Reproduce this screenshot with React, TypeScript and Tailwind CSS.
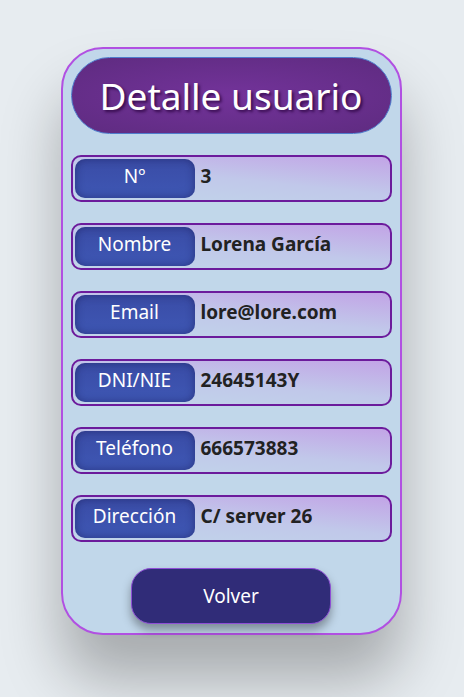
const rows = [
  { label: "Nº", value: "3" },
  { label: "Nombre", value: "Lorena García" },
  { label: "Email", value: "lore@lore.com" },
  { label: "DNI/NIE", value: "24645143Y" },
  { label: "Teléfono", value: "666573883" },
  { label: "Dirección", value: "C/ server 26" },
]

export default function App() {
  return (
    <div className="flex min-h-[697px] justify-center bg-[#e7ecf0] pt-[47px] pr-[2px] font-['Noto_Sans','Open_Sans',sans-serif]">
      <div className="flex h-[588px] w-[341px] flex-col items-center rounded-[42px] border-2 border-[#b150e2] bg-[#c1d7ea] px-[8px] pt-[8px] shadow-[0_45px_60px_rgba(0,0,0,0.28)]">
        <div className="flex h-[77px] w-full items-center justify-center rounded-[40px] border border-[#4f7ccc] bg-[radial-gradient(ellipse_at_center,#73339a_0%,#5e2b80_100%)]">
          <h1 className="text-[37px] leading-none text-white [text-shadow:2px_2px_3px_rgba(40,0,60,0.8)]">
            Detalle usuario
          </h1>
        </div>

        <div className="mt-[21px] flex w-full flex-col gap-[21px]">
          {rows.map((row) => (
            <div
              key={row.label}
              className="flex h-[47px] items-start gap-[6px] rounded-[10px] border-2 border-[#6c1b9c] bg-[linear-gradient(186deg,#c2a4e6_0%,#c1c8ea_50%,#c1d6ea_100%)] p-[2px]"
            >
              <div className="flex h-[39px] w-[120px] shrink-0 items-start justify-center rounded-[10px] bg-[linear-gradient(180deg,#3a4ca6_0%,#3e57b4_100%)] pt-[4px] text-[19px] leading-[26px] text-white shadow-[inset_0_0_8px_rgba(20,20,80,0.5)]">
                {row.label}
              </div>
              <div className="pt-[4px] text-[19px] font-bold leading-[26px] text-[#222]">
                {row.value}
              </div>
            </div>
          ))}
        </div>

        <button className="mt-[26px] h-[56px] w-[200px] rounded-[20px] border border-[#8e4ed6] bg-[#302c78] text-[19px] text-white shadow-[0_6px_10px_rgba(0,0,0,0.35)]">
          Volver
        </button>
      </div>
    </div>
  )
}
